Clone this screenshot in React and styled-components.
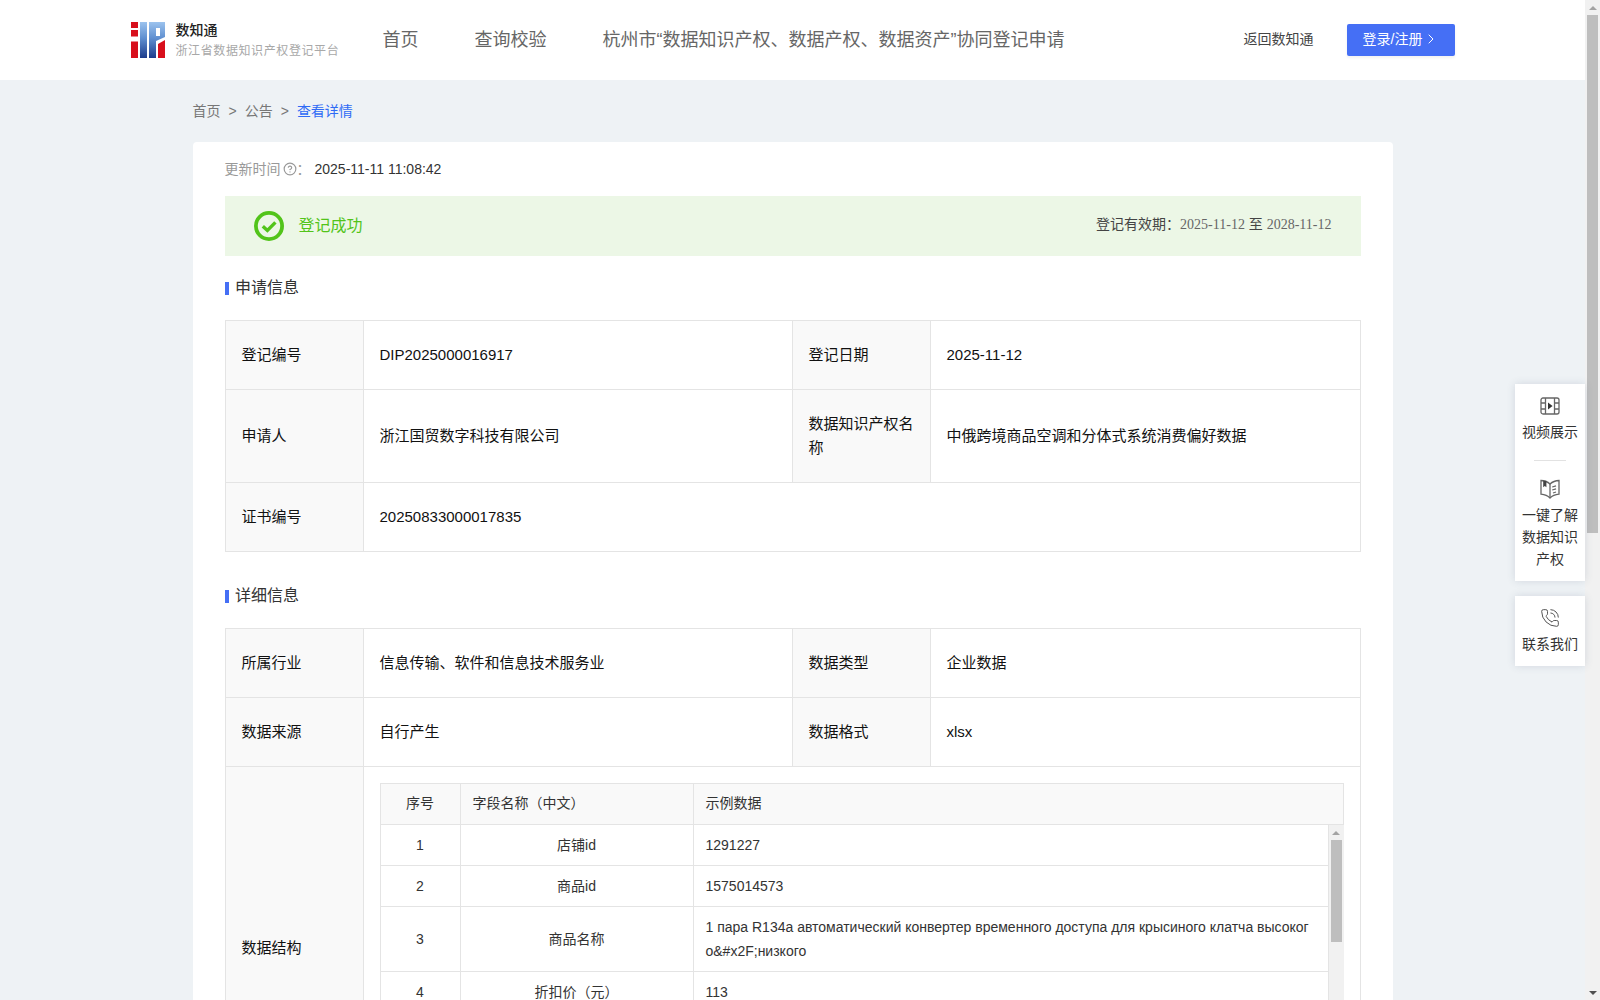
import React from 'react';
import styled, { createGlobalStyle } from 'styled-components';
import { ChevronRight, CircleHelp, PhoneCall } from 'lucide-react';

const GlobalStyle = createGlobalStyle`
  html, body {
    margin: 0;
    padding: 0;
    background: #eef2f5;
  }
  body {
    font-family: "Liberation Sans", "Noto Sans CJK SC", sans-serif;
    font-size: 14px;
    color: #333;
  }
`;

const Page = styled.div`
  position: relative;
  display: flex;
  width: 1600px;
  height: 1000px;
  overflow: hidden;
`;

const Main = styled.div`
  flex: 1;
  min-width: 0;
  background: #eef2f5;
`;

const Header = styled.header`
  height: 80px;
  background: #fff;
`;

const HeaderInner = styled.div`
  display: flex;
  align-items: center;
  width: 1324px;
  height: 100%;
  margin: 0 auto;
`;

const Brand = styled.div`
  display: flex;
  align-items: center;
  gap: 11px;
  width: 252px;
`;

const BrandText = styled.div`
  display: flex;
  flex-direction: column;
  gap: 3px;
`;

const BrandName = styled.div`
  font-size: 14px;
  line-height: 18px;
  font-weight: 500;
  color: #222;
`;

const BrandSub = styled.div`
  font-size: 12px;
  line-height: 18px;
  letter-spacing: 0.6px;
  color: #a8a8a8;
  white-space: nowrap;
`;

const Nav = styled.nav`
  display: flex;
  gap: 56px;
  flex: 1;
  font-size: 18px;
  line-height: 24px;
  color: #666;
  white-space: nowrap;
`;

const BackLink = styled.a`
  font-size: 14px;
  line-height: 22px;
  color: #444;
  margin: 0 33px 2px 0;
`;

const LoginButton = styled.button`
  display: flex;
  align-items: center;
  gap: 1px;
  width: 108px;
  height: 32px;
  padding: 0 0 2px 16px;
  border: 0;
  border-radius: 2px;
  background: #456ff5;
  box-shadow: 0 2px 3px rgba(0, 0, 0, 0.06);
  color: #fff;
  font: inherit;
  font-size: 14px;
  line-height: 22px;
`;

const Breadcrumb = styled.div`
  display: flex;
  gap: 8px;
  width: 1200px;
  margin: 0 auto;
  padding: 20px 0;
  line-height: 22px;
  color: #777;
`;

const CrumbCurrent = styled.span`
  color: #2f6bf5;
`;

const Card = styled.main`
  width: 1200px;
  margin: 0 auto;
  padding: 16px 32px 0;
  box-sizing: border-box;
  background: #fff;
  border-radius: 4px;
`;

const UpdateRow = styled.div`
  display: flex;
  align-items: center;
  margin-bottom: 16px;
  line-height: 22px;
  color: #999;
`;

const UpdateValue = styled.span`
  margin-left: 4px;
  color: #333;
`;

const HelpIcon = styled(CircleHelp)`
  margin-left: 2px;
  color: #999;
`;

const StatusBar = styled.div`
  display: flex;
  align-items: center;
  justify-content: space-between;
  height: 60px;
  padding: 0 29px;
  background: #ecf7e6;
  line-height: 22px;
`;

const StatusLeft = styled.div`
  display: flex;
  align-items: center;
  gap: 15px;
  font-size: 16px;
  color: #52c41a;
`;

const Validity = styled.div`
  margin-bottom: 3px;
  color: #444;
`;

const ValidityDate = styled.span`
  font-family: "Liberation Serif", "Noto Sans CJK SC", serif;
  color: #666;
`;

const SectionTitle = styled.h2`
  display: flex;
  align-items: center;
  gap: 6.5px;
  margin: ${(p) => p.$top + 1}px 0 21px;
  font-size: 16px;
  line-height: 22px;
  font-weight: 400;
  color: #333;
  &::before {
    content: '';
    width: 4px;
    height: 13px;
    background: #456ff5;
  }
`;

const InfoTable = styled.table`
  width: calc(100% - 1px);
  table-layout: fixed;
  border-collapse: collapse;
  font-size: 15px;
  line-height: 24px;
  color: #111;
`;

const Label = styled.th`
  padding: 22px 16px;
  border: 1px solid #e4e4e4;
  background: #f9f9f9;
  font-weight: 400;
  text-align: left;
`;

const Value = styled.td`
  padding: ${(p) => (p.$nested ? '16px' : '22px 16px')};
  border: 1px solid #e4e4e4;
`;

const FieldTable = styled.table`
  width: 100%;
  table-layout: fixed;
  border-collapse: collapse;
  font-size: 14px;
  line-height: 24px;
  color: #333;
`;

const FieldHead = styled.th`
  padding: 7px 12px 9px;
  border: 1px solid #e4e4e4;
  background: #f9f9f9;
  font-weight: 400;
  text-align: ${(p) => p.$align || 'left'};
`;

const FieldCell = styled.td`
  padding: 8px 12px;
  border: 1px solid #e4e4e4;
  border-top-width: ${(p) => (p.$first ? 0 : 1)}px;
  text-align: ${(p) => p.$align || 'left'};
`;

const FieldScroll = styled.div`
  display: flex;
  height: 288px;
  overflow: hidden;
`;

const FieldBody = styled.div`
  flex: 1;
  min-width: 0;
`;

const Track = styled.div`
  display: flex;
  flex: none;
  flex-direction: column;
  align-items: center;
  width: 15px;
  background: #f1f1f1;
`;

const Arrow = styled.div`
  display: flex;
  flex: none;
  align-items: center;
  justify-content: center;
  height: 15px;
  &::before {
    content: '';
    border-left: 4px solid transparent;
    border-right: 4px solid transparent;
    border-${(p) => (p.$down ? 'top' : 'bottom')}: 4px solid ${(p) => (p.$down ? '#505050' : '#a3a3a3')};
  }
`;

const Thumb = styled.div`
  flex: none;
  width: 11px;
  height: ${(p) => p.$height}px;
  background: #bebebe;
`;

const TrackFill = styled.div`
  flex: 1;
`;

const SideDock = styled.aside`
  position: absolute;
  top: 384px;
  right: 15px;
  display: flex;
  flex-direction: column;
  gap: 15px;
  width: 70px;
`;

const DockPanel = styled.div`
  display: flex;
  flex-direction: column;
  align-items: center;
  padding: 12px 7px 11px;
  background: #fff;
  box-shadow: 0 0 8px rgba(60, 80, 110, 0.16);
  text-align: center;
  line-height: 22px;
  color: #333;
`;

const DockItem = styled.div`
  display: flex;
  flex-direction: column;
  align-items: center;
  gap: 5px;
`;

const DockDivider = styled.div`
  width: 32px;
  height: 1px;
  margin: 17px 0 18px;
  background: #e2e2e2;
`;

const DockPhone = styled(PhoneCall)`
  color: #555;
`;

const Logo = () => (
  <svg width="34" height="36" viewBox="0 0 34 36">
    <defs>
      <linearGradient id="logoBlue" x1="0" y1="0" x2="0" y2="1">
        <stop offset="0" stopColor="#9cc3ee" />
        <stop offset="0.45" stopColor="#5f8fd0" />
        <stop offset="1" stopColor="#1d3c8c" />
      </linearGradient>
    </defs>
    <path fill="#d80f1c" d="M0 0h7v6H0zM0 8h7v6.5H0zM0 19.5h7V36H0z" />
    <rect fill="url(#logoBlue)" x="9" width="7" height="36" />
    <path fill="url(#logoBlue)" fillRule="evenodd" d="M18 0h16v15l-9 4v17h-7zM25 6v8h4V6z" />
    <path fill="#d80f1c" d="M27 22l7-4v18h-7z" />
  </svg>
);

const SuccessIcon = () => (
  <svg width="30" height="30" viewBox="0 0 30 30" fill="none" stroke="#52c41a">
    <circle cx="15" cy="15" r="13.1" strokeWidth="3.8" />
    <path d="M8.8 15.2l4.6 4.2L21.4 11.4" strokeWidth="3.4" />
  </svg>
);

const VideoIcon = () => (
  <svg width="20" height="20" viewBox="0 0 20 20" fill="none" stroke="#666" strokeWidth="1.3">
    <rect x="1" y="2" width="18" height="16" rx="2" />
    <path d="M5.5 2v16M14.5 2v16M1 7h4.5M1 13h4.5M14.5 7H19M14.5 13H19" />
    <path d="M8 6.6l4.6 3.4L8 13.4z" fill="#333" stroke="none" />
  </svg>
);

const BookIcon = () => (
  <svg width="20" height="20" viewBox="0 0 20 20" fill="none" stroke="#666" strokeWidth="1.3">
    <path d="M10 5C8 3.2 4.5 1.6 1 1.5v13.7c3.5.4 7 1.8 9 3.8 2-2 5.5-3.4 9-3.8V1.5C15.5 1.6 12 3.2 10 5z" />
    <path d="M10 5v14" />
    <path d="M3.2 1.8h3.2v6.4L4.8 7 3.2 8.2z" fill="#444" stroke="none" />
    <path d="M12.2 8l3.8-1.2M12.2 11l3.8-1.2M13 14l3-1" />
  </svg>
);

const Scrollbar = ({ thumbHeight, fill, downArrow }) => (
  <Track>
    <Arrow />
    <Thumb $height={thumbHeight} />
    {fill && <TrackFill />}
    {downArrow && <Arrow $down />}
  </Track>
);

export default function App() {
  return (
    <Page>
      <GlobalStyle />
      <Main>
        <Header>
          <HeaderInner>
            <Brand>
              <Logo />
              <BrandText>
                <BrandName>数知通</BrandName>
                <BrandSub>浙江省数据知识产权登记平台</BrandSub>
              </BrandText>
            </Brand>
            <Nav>
              <span>首页</span>
              <span>查询校验</span>
              <span>杭州市“数据知识产权、数据产权、数据资产”协同登记申请</span>
            </Nav>
            <BackLink>返回数知通</BackLink>
            <LoginButton>
              登录/注册
              <ChevronRight size={16} strokeWidth={1.5} />
            </LoginButton>
          </HeaderInner>
        </Header>

        <Breadcrumb>
          <span>首页</span>
          <span>&gt;</span>
          <span>公告</span>
          <span>&gt;</span>
          <CrumbCurrent>查看详情</CrumbCurrent>
        </Breadcrumb>

        <Card>
          <UpdateRow>
            更新时间
            <HelpIcon size={14} strokeWidth={2} />
            ：<UpdateValue>2025-11-11 11:08:42</UpdateValue>
          </UpdateRow>

          <StatusBar>
            <StatusLeft>
              <SuccessIcon />
              登记成功
            </StatusLeft>
            <Validity>
              登记有效期：<ValidityDate>2025-11-12</ValidityDate> 至 <ValidityDate>2028-11-12</ValidityDate>
            </Validity>
          </StatusBar>

          <SectionTitle $top={20}>申请信息</SectionTitle>
          <InfoTable>
            <colgroup>
              <col width="138" />
              <col width="429" />
              <col width="138" />
              <col width="430" />
            </colgroup>
            <tbody>
              <tr>
                <Label>登记编号</Label>
                <Value>DIP2025000016917</Value>
                <Label>登记日期</Label>
                <Value>2025-11-12</Value>
              </tr>
              <tr>
                <Label>申请人</Label>
                <Value>浙江国贸数字科技有限公司</Value>
                <Label>数据知识产权名称</Label>
                <Value>中俄跨境商品空调和分体式系统消费偏好数据</Value>
              </tr>
              <tr>
                <Label>证书编号</Label>
                <Value colSpan={3}>20250833000017835</Value>
              </tr>
            </tbody>
          </InfoTable>

          <SectionTitle $top={32}>详细信息</SectionTitle>
          <InfoTable>
            <colgroup>
              <col width="138" />
              <col width="429" />
              <col width="138" />
              <col width="430" />
            </colgroup>
            <tbody>
              <tr>
                <Label>所属行业</Label>
                <Value>信息传输、软件和信息技术服务业</Value>
                <Label>数据类型</Label>
                <Value>企业数据</Value>
              </tr>
              <tr>
                <Label>数据来源</Label>
                <Value>自行产生</Value>
                <Label>数据格式</Label>
                <Value>xlsx</Value>
              </tr>
              <tr>
                <Label>数据结构</Label>
                <Value colSpan={3} $nested>
                  <FieldTable>
                    <colgroup>
                      <col width="80" />
                      <col width="233" />
                      <col />
                    </colgroup>
                    <thead>
                      <tr>
                        <FieldHead $align="center">序号</FieldHead>
                        <FieldHead>字段名称（中文）</FieldHead>
                        <FieldHead>示例数据</FieldHead>
                      </tr>
                    </thead>
                  </FieldTable>
                  <FieldScroll>
                    <FieldBody>
                      <FieldTable>
                        <colgroup>
                          <col width="80" />
                          <col width="233" />
                          <col />
                        </colgroup>
                        <tbody>
                          <tr>
                            <FieldCell $first $align="center">1</FieldCell>
                            <FieldCell $first $align="center">店铺id</FieldCell>
                            <FieldCell $first>1291227</FieldCell>
                          </tr>
                          <tr>
                            <FieldCell $align="center">2</FieldCell>
                            <FieldCell $align="center">商品id</FieldCell>
                            <FieldCell>1575014573</FieldCell>
                          </tr>
                          <tr>
                            <FieldCell $align="center">3</FieldCell>
                            <FieldCell $align="center">商品名称</FieldCell>
                            <FieldCell>
                              1 пара R134a автоматический конвертер временного доступа для крысиного клатча высоког
                              <br />
                              о&amp;#x2F;низкого
                            </FieldCell>
                          </tr>
                          <tr>
                            <FieldCell $align="center">4</FieldCell>
                            <FieldCell $align="center">折扣价（元）</FieldCell>
                            <FieldCell>113</FieldCell>
                          </tr>
                        </tbody>
                      </FieldTable>
                    </FieldBody>
                    <Scrollbar thumbHeight={102} fill />
                  </FieldScroll>
                </Value>
              </tr>
            </tbody>
          </InfoTable>
        </Card>
      </Main>

      <Scrollbar thumbHeight={518} fill downArrow />

      <SideDock>
        <DockPanel>
          <DockItem>
            <VideoIcon />
            视频展示
          </DockItem>
          <DockDivider />
          <DockItem>
            <BookIcon />
            一键了解数据知识产权
          </DockItem>
        </DockPanel>
        <DockPanel>
          <DockItem>
            <DockPhone size={20} strokeWidth={1.2} />
            联系我们
          </DockItem>
        </DockPanel>
      </SideDock>
    </Page>
  );
}
